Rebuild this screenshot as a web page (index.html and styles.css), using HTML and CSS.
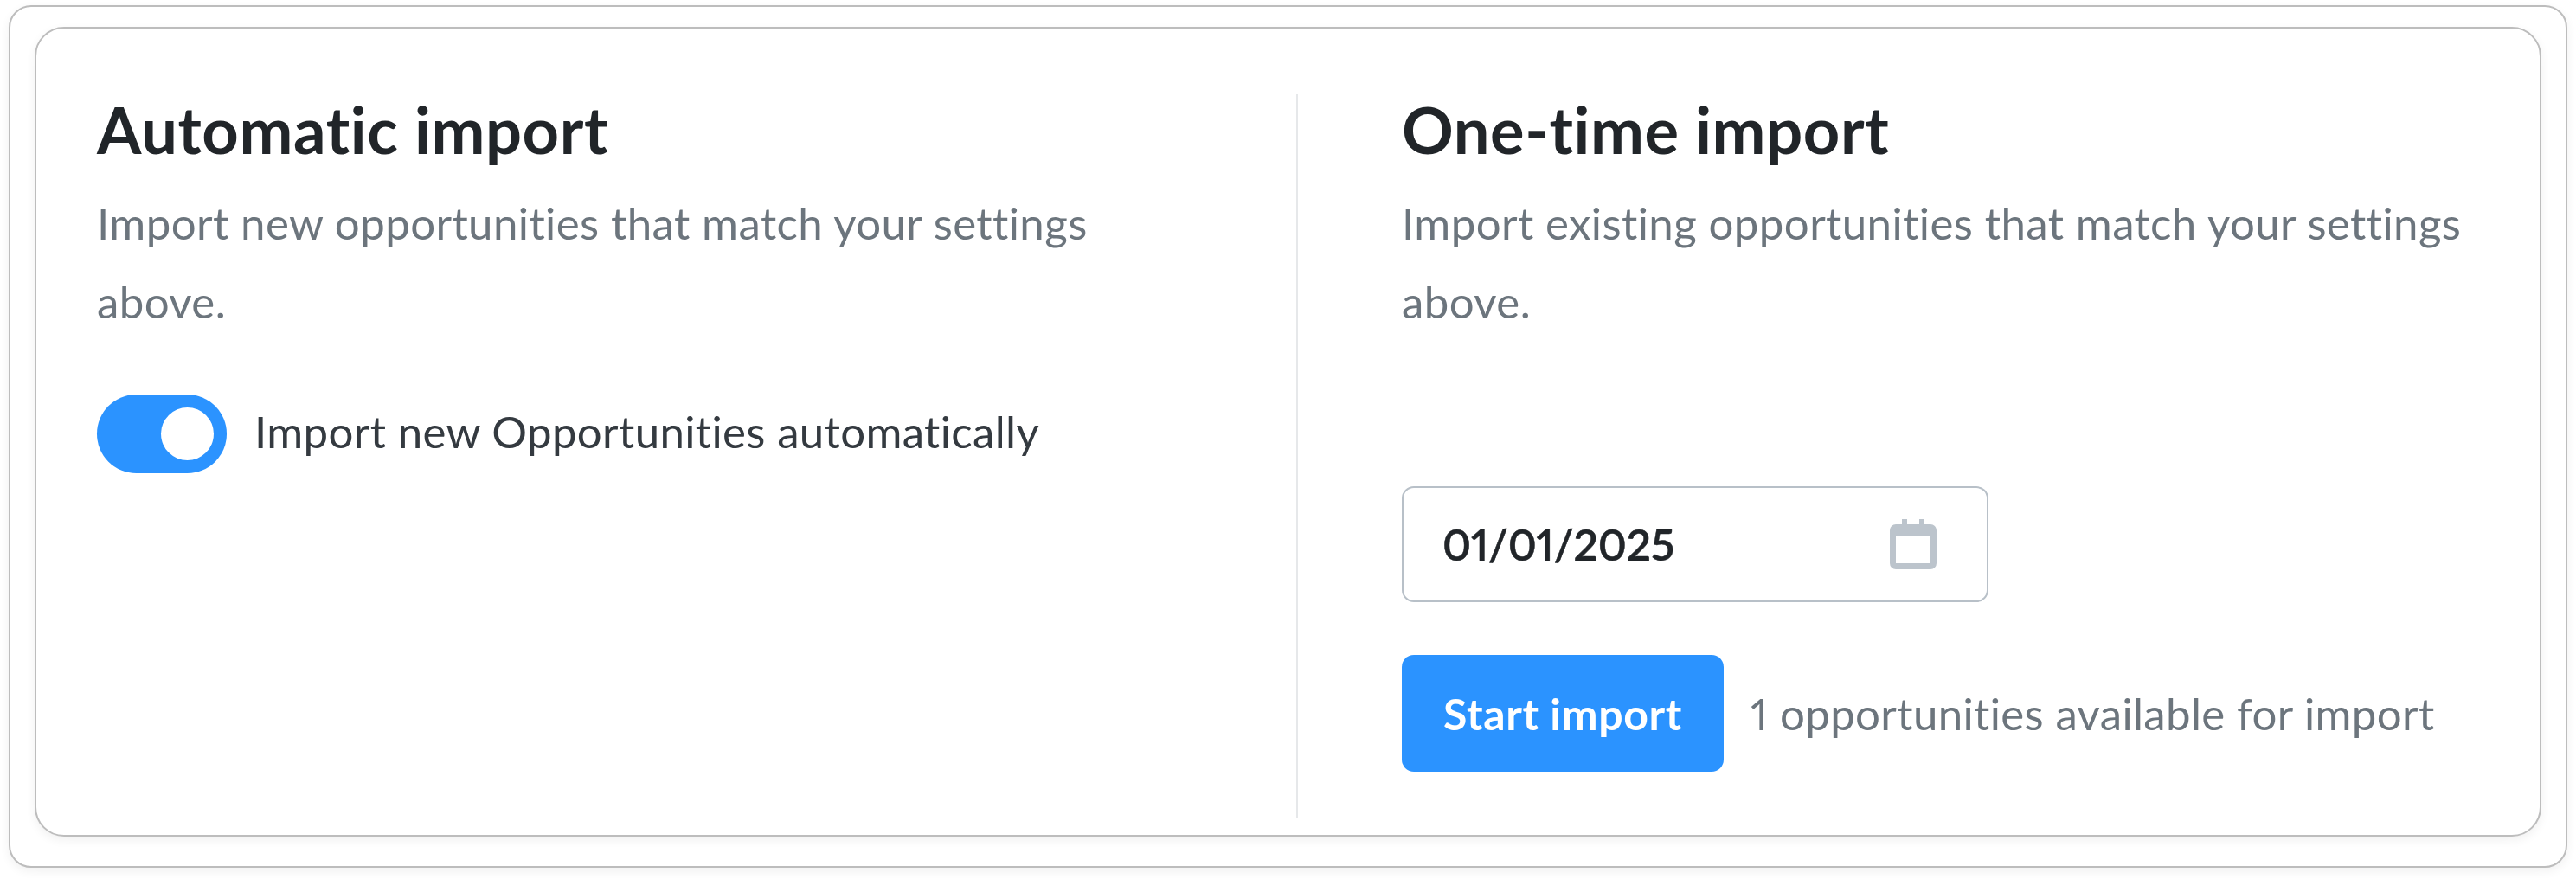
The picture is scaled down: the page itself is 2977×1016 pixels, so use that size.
FILE: index.html
```html
<!DOCTYPE html>
<html lang="en">
<head>
<meta charset="utf-8">
<title>Import settings</title>
<link rel="stylesheet" href="styles.css">
</head>
<body>
<div class="outer">
  <section class="card">
    <div class="col col-left">
      <h2 class="title">Automatic import</h2>
      <p class="desc">Import new opportunities that match your settings above.</p>
      <div class="switch-row">
        <span class="switch"><span class="knob"></span></span>
        <span class="switch-label">Import new Opportunities automatically</span>
      </div>
    </div>
    <div class="col col-right">
      <h2 class="title">One-time import</h2>
      <p class="desc">Import existing opportunities that match your settings above.</p>
      <div class="date-field">
        <span class="date-value">01/01/2025</span>
        <svg class="cal" viewBox="0 0 54 58" aria-hidden="true">
          <path fill="#bcc4cc" fill-rule="evenodd" d="M14 0h6v6h14V0h6v6h7a7 7 0 0 1 7 7v38a7 7 0 0 1-7 7H7a7 7 0 0 1-7-7V13a7 7 0 0 1 7-7h7zM7 20v31h40V20z"/>
        </svg>
      </div>
      <div class="action-row">
        <button class="start" type="button">Start import</button>
        <span class="avail">1 opportunities available for import</span>
      </div>
    </div>
  </section>
</div>
</body>
</html>
```
FILE: styles.css
```css
* { box-sizing: border-box; }
html, body { margin: 0; background: #fff; }
body {
  font-family: Lato, "Open Sans", sans-serif;
  font-variant-ligatures: none;
  font-variant-numeric: proportional-nums;
  padding: 6px 10px 13px;
}
.outer {
  width: 2957px;
  height: 997px;
  padding: 23px 28px 34px;
  border: 2px solid #bdbdbd;
  border-radius: 26px;
  background: #fff;
  box-shadow: 0 4px 12px rgba(0,0,0,.06);
}
.card {
  display: flex;
  height: 100%;
  padding: 76px 0 20px;
  border: 2px solid #bdbdbd;
  border-radius: 34px;
  background: #fff;
  box-shadow: 0 4px 12px rgba(0,0,0,.06);
}
.col-left { width: 1456px; padding-left: 70px; padding-right: 180px; }
.col-right { flex: 1; padding-left: 120px; padding-right: 60px; border-left: 2px solid #e6e8ea; }
.title {
  margin: 0 0 21px;
  font-size: 74px;
  line-height: 82px;
  font-weight: 700;
  letter-spacing: .6px;
  color: #212529;
}
.desc {
  margin: 0;
  font-size: 51px;
  line-height: 91px;
  letter-spacing: .4px;
  color: #6c757d;
}
.switch-row { display: flex; align-items: center; gap: 32px; margin-top: 62px; }
.switch {
  display: flex;
  align-items: center;
  justify-content: flex-end;
  width: 150px;
  height: 91px;
  padding-right: 15px;
  border-radius: 46px;
  background: #2b93ff;
}
.knob { width: 61px; height: 61px; border-radius: 50%; background: #fff; }
.switch-label { padding-bottom: 6px; font-size: 51px; letter-spacing: .35px; color: #343a40; }
.date-field {
  display: flex;
  align-items: center;
  justify-content: space-between;
  width: 678px;
  height: 134px;
  margin-top: 168px;
  padding: 0 58px 0 45px;
  border: 2px solid #b8c0c8;
  border-radius: 14px;
}
.date-value { font-size: 50px; font-weight: 600; letter-spacing: -.2px; -webkit-text-stroke: .5px #212529; color: #212529; }
.cal { width: 54px; height: 58px; }
.action-row { display: flex; align-items: center; gap: 31px; margin-top: 61px; }
.start {
  width: 372px;
  height: 135px;
  padding: 0;
  border: 0;
  border-radius: 14px;
  background: #2b93ff;
  color: #fff;
  font-family: inherit;
  font-size: 50px;
  font-weight: 700;
  letter-spacing: .6px;
}
.avail { font-size: 51px; letter-spacing: .35px; color: #6c757d; }
```
